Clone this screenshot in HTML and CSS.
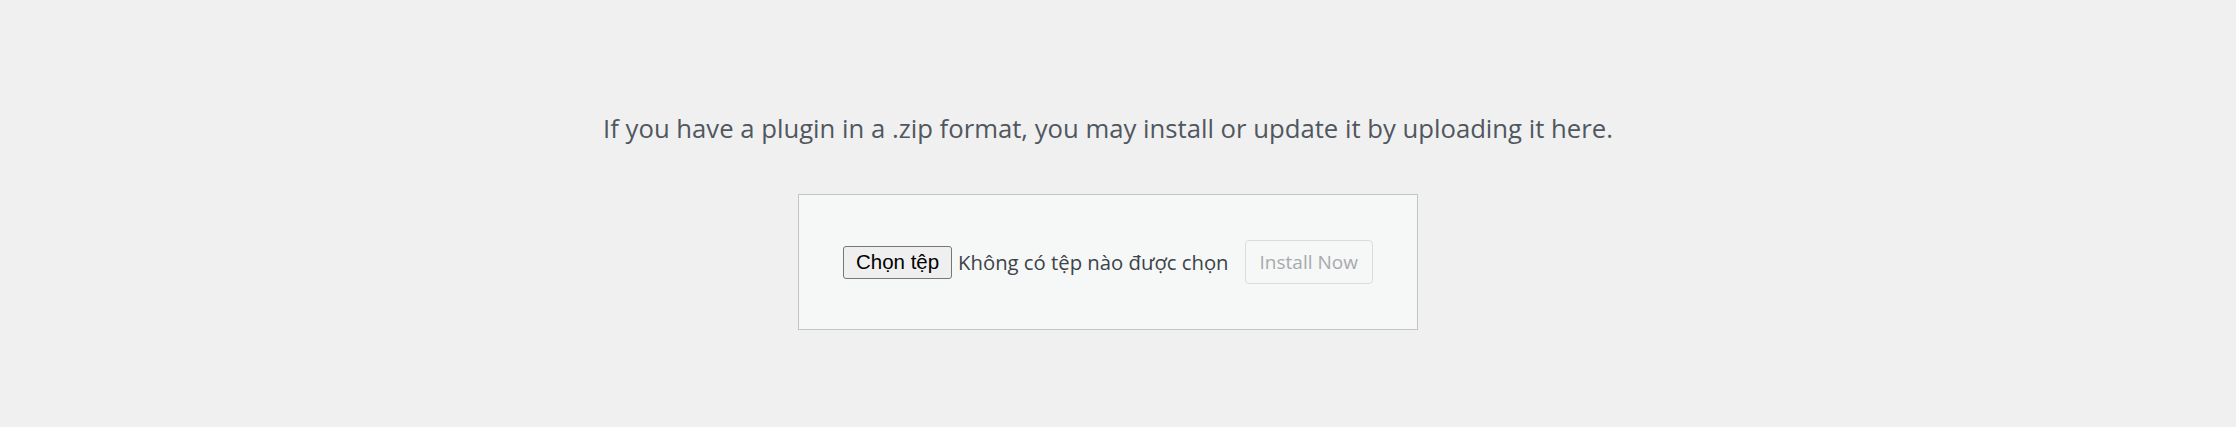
FILE: index.html
```html
<!DOCTYPE html>
<html lang="vi">
<head>
<meta charset="utf-8">
<title>Upload Plugin</title>
<link rel="stylesheet" href="styles.css">
</head>
<body>
<div class="upload-plugin">
  <p class="install-help">If you have a plugin in a .zip format, you may install or update it by uploading it here.</p>
  <form class="upload-form">
    <span class="file-field">
      <button type="button" class="file-btn">Chọn tệp</button>
      <span class="file-label">Không có tệp nào được chọn</span>
    </span>
    <button type="button" class="install-btn" disabled>Install Now</button>
  </form>
</div>
</body>
</html>
```
FILE: styles.css
```css
html, body {
  margin: 0;
  padding: 0;
  background: #f0f0f1;
}
body {
  font-family: "Open Sans", "Noto Sans", sans-serif;
  color: #50575e;
}
.upload-plugin {
  padding-right: 20px;
  text-align: center;
}
.install-help {
  margin: 0;
  padding-top: 111px;
  font-size: 25.7px;
  line-height: 36px;
  color: #50575e;
}
.upload-form {
  display: inline-flex;
  align-items: center;
  margin-top: 47px;
  padding: 45px 44px;
  background: #f6f7f7;
  border: 1px solid #c3c4c7;
}
.file-field {
  display: inline-flex;
  align-items: center;
}
.file-btn {
  box-sizing: border-box;
  width: 109px;
  height: 33px;
  padding: 0;
  margin: 0;
  font-family: "Liberation Sans", Arial, sans-serif;
  font-size: 20.5px;
  color: #000;
  background: #efefef;
  border: 1px solid #767676;
  border-radius: 3px;
}
.file-label {
  margin-left: 6px;
  font-size: 20.3px;
  color: #3c434a;
}
.install-btn {
  box-sizing: border-box;
  height: 44px;
  margin: 0 0 0 16px;
  padding: 0 14px;
  font-family: "Open Sans", "Noto Sans", sans-serif;
  font-size: 19px;
  color: #a7aaad;
  background: #f6f7f7;
  border: 1px solid #dcdcde;
  border-radius: 4px;
}
```
